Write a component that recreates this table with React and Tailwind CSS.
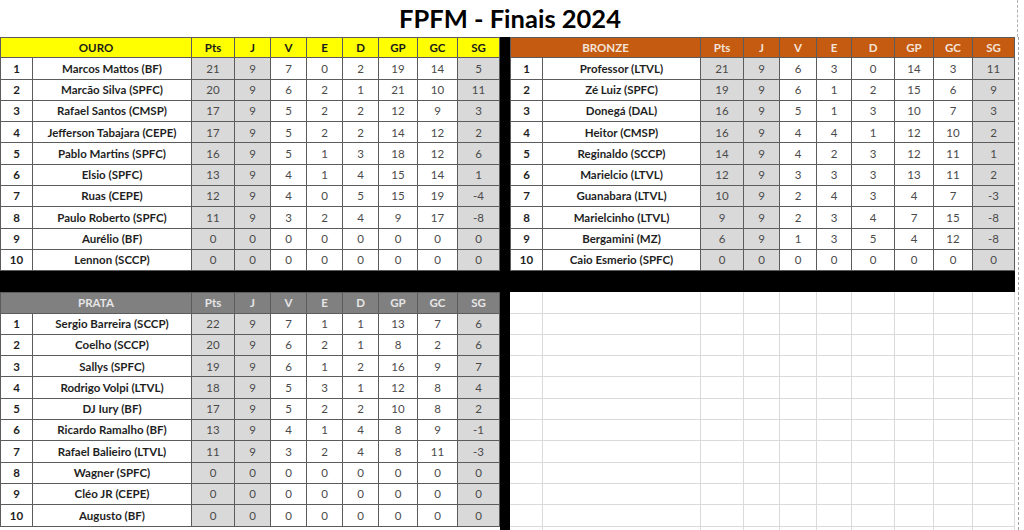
import React from "react";

const ouro = [
  ["Marcos Mattos (BF)", 21, 9, 7, 0, 2, 19, 14, 5],
  ["Marcão Silva (SPFC)", 20, 9, 6, 2, 1, 21, 10, 11],
  ["Rafael Santos (CMSP)", 17, 9, 5, 2, 2, 12, 9, 3],
  ["Jefferson Tabajara (CEPE)", 17, 9, 5, 2, 2, 14, 12, 2],
  ["Pablo Martins (SPFC)", 16, 9, 5, 1, 3, 18, 12, 6],
  ["Elsio (SPFC)", 13, 9, 4, 1, 4, 15, 14, 1],
  ["Ruas (CEPE)", 12, 9, 4, 0, 5, 15, 19, -4],
  ["Paulo Roberto (SPFC)", 11, 9, 3, 2, 4, 9, 17, -8],
  ["Aurélio (BF)", 0, 0, 0, 0, 0, 0, 0, 0],
  ["Lennon (SCCP)", 0, 0, 0, 0, 0, 0, 0, 0],
];

const bronze = [
  ["Professor (LTVL)", 21, 9, 6, 3, 0, 14, 3, 11],
  ["Zé Luiz (SPFC)", 19, 9, 6, 1, 2, 15, 6, 9],
  ["Donegá (DAL)", 16, 9, 5, 1, 3, 10, 7, 3],
  ["Heitor (CMSP)", 16, 9, 4, 4, 1, 12, 10, 2],
  ["Reginaldo (SCCP)", 14, 9, 4, 2, 3, 12, 11, 1],
  ["Marielcio (LTVL)", 12, 9, 3, 3, 3, 13, 11, 2],
  ["Guanabara (LTVL)", 10, 9, 2, 4, 3, 4, 7, -3],
  ["Marielcinho (LTVL)", 9, 9, 2, 3, 4, 7, 15, -8],
  ["Bergamini (MZ)", 6, 9, 1, 3, 5, 4, 12, -8],
  ["Caio Esmerio (SPFC)", 0, 0, 0, 0, 0, 0, 0, 0],
];

const prata = [
  ["Sergio Barreira (SCCP)", 22, 9, 7, 1, 1, 13, 7, 6],
  ["Coelho (SCCP)", 20, 9, 6, 2, 1, 8, 2, 6],
  ["Sallys (SPFC)", 19, 9, 6, 1, 2, 16, 9, 7],
  ["Rodrigo Volpi (LTVL)", 18, 9, 5, 3, 1, 12, 8, 4],
  ["DJ Iury (BF)", 17, 9, 5, 2, 2, 10, 8, 2],
  ["Ricardo Ramalho (BF)", 13, 9, 4, 1, 4, 8, 9, -1],
  ["Rafael Balieiro (LTVL)", 11, 9, 3, 2, 4, 8, 11, -3],
  ["Wagner (SPFC)", 0, 0, 0, 0, 0, 0, 0, 0],
  ["Cléo JR (CEPE)", 0, 0, 0, 0, 0, 0, 0, 0],
  ["Augusto (BF)", 0, 0, 0, 0, 0, 0, 0, 0],
];

const heads = ["Pts", "J", "V", "E", "D", "GP", "GC", "SG"];

const LEFT_COLS = "grid grid-cols-[33px_159px_43px_36px_36px_36px_36px_39px_40px_42px] auto-rows-[21.3px]";
const RIGHT_COLS = "grid grid-cols-[33px_158px_43px_36px_37px_35px_43px_39px_39px_42px] auto-rows-[21.3px]";

const cell = "flex items-center justify-center border-r border-b border-[#5c5c5c] whitespace-nowrap overflow-hidden";

function Table({ cols, title, headBg, headText, rows }) {
  return (
    <div className={cols}>
      <div className={`${cell} col-span-2 border-l border-t ${headBg} ${headText} font-bold`}>{title}</div>
      {heads.map((h) => (
        <div key={h} className={`${cell} border-t ${headBg} ${headText} font-bold`}>{h}</div>
      ))}
      {rows.map((r, i) => (
        <React.Fragment key={i}>
          <div className={`${cell} border-l font-bold text-[#1f1f1f]`}>{i + 1}</div>
          <div className={`${cell} font-bold text-[#1f1f1f]`}>{r[0]}</div>
          {r.slice(1).map((v, j) => (
            <div
              key={j}
              className={`${cell} text-[#4a4a4a] ${j === 0 || j === 1 || j === 7 ? "bg-[#d9d9d9]" : "bg-white"}`}
            >
              {v}
            </div>
          ))}
        </React.Fragment>
      ))}
    </div>
  );
}

function EmptyGrid({ cols, count }) {
  const cells = [];
  for (let r = 0; r < count; r++) {
    for (let c = 0; c < 10; c++) {
      cells.push(<div key={r + "-" + c} className="border-r border-b border-[#dadada]" />);
    }
  }
  return <div className={cols}>{cells}</div>;
}

export default function App() {
  return (
    <div
      className="w-[1024px] h-[530px] bg-white overflow-hidden relative text-[11.5px] leading-none"
      style={{ fontFamily: "Lato, 'Open Sans', sans-serif" }}
    >
      <div className="h-[37px] flex items-center justify-center text-[25.5px] font-bold text-black leading-none pt-[1px] pr-[4px]">
        FPFM - Finais 2024
      </div>
      <div className="flex">
        <div className="w-[500px] flex flex-col">
          <Table cols={LEFT_COLS} title="OURO" headBg="bg-[#ffff00]" headText="text-[#1a1a1a]" rows={ouro} />
          <div className="h-[21px] bg-black" />
          <Table cols={LEFT_COLS} title="PRATA" headBg="bg-[#808080]" headText="text-[#e6e6e6]" rows={prata} />
        </div>
        <div className="w-[10px] bg-black h-[493px]" />
        <div className="w-[505px] flex flex-col">
          <Table cols={RIGHT_COLS} title="BRONZE" headBg="bg-[#c55a11]" headText="text-[#f4e4d8]" rows={bronze} />
          <div className="h-[21px] bg-black" />
          <EmptyGrid cols={RIGHT_COLS} count={12} />
        </div>
        <div className="w-[3px]" />
        <div className="w-0 h-[493px] border-l border-dashed border-[#a0a0a0]" />
      </div>
      <div className="absolute top-0 right-[6px] h-[37px] border-l border-dashed border-[#b0b0b0]" />
    </div>
  );
}
